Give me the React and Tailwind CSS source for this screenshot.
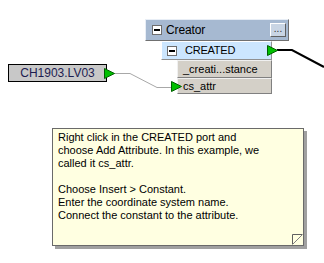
const Port = ({ className = '' }) => (
  <svg className={`relative z-10 shrink-0 ${className}`} width="11" height="11" viewBox="0 0 11 11">
    <polygon points="0.5,0.5 10.5,5.5 0.5,10.5" fill="#00c000" stroke="#006000" strokeWidth="1" />
  </svg>
);

const MinusBox = () => (
  <span className="flex h-[10px] w-[10px] shrink-0 items-center justify-center border border-[#6e6e6e] bg-white">
    <span className="h-[2px] w-[6px] bg-black" />
  </span>
);

const attrRow =
  'flex w-[95px] items-center border border-t-[#f0f0f0] border-l-[#f0f0f0] border-r-[#808080] border-b-[#808080] bg-[#d4d0c8] pl-[5px]';

export default function App() {
  return (
    <div className="relative h-[263px] w-[324px] overflow-hidden bg-white font-['Liberation_Sans',Arial,sans-serif] text-[11px] text-black">
      {/* connections */}
      <svg className="absolute left-0 top-0" width="324" height="263">
        <polyline points="114,73.5 130,73.5 157,87.5 172,87.5" fill="none" stroke="#a8a8a8" strokeWidth="1" />
        <polyline points="277,50 292,50 324,67" fill="none" stroke="#000" strokeWidth="2" />
      </svg>

      {/* source node */}
      <div className="absolute left-[8px] top-[64px] flex items-center">
        <div className="flex h-[18px] w-[99px] items-center justify-center border border-black bg-[#c8c8c8] text-[12px] text-[#1c1c50]">
          CH1903.LV03
        </div>
        <Port className="-ml-[3px]" />
      </div>

      {/* Creator transformer */}
      <div className="absolute left-[145px] top-[19px] flex flex-col items-start">
        <div className="flex h-[22px] w-[144px] items-center gap-[4px] border border-t-[#e8eef6] border-l-[#e8eef6] border-r-[#707070] border-b-[#707070] bg-[#a6b9d1] pl-[6px] pr-[2px]">
          <MinusBox />
          <span className="flex-1 text-[12px] tracking-[-0.01em]">Creator</span>
          <span className="flex h-[14px] w-[16px] items-start justify-center border border-t-white border-l-white border-r-[#606060] border-b-[#606060] bg-[#c9d5e4] text-[10px] leading-[9px] text-[#303030]">
            ...
          </span>
        </div>
        <div className="ml-[16px] flex items-center">
          <div className="flex h-[19px] w-[111px] items-center gap-[8px] border border-t-white border-l-white border-r-[#909090] border-b-[#909090] bg-[#cce6fe] pl-[5px]">
            <MinusBox />
            <span className="tracking-[-0.02em]">CREATED</span>
          </div>
          <Port className="-ml-[5px]" />
        </div>
        <div className={`ml-[32px] h-[18px] ${attrRow}`}>_creati...stance</div>
        <div className="ml-[26px] flex items-center">
          <Port />
          <div className={`-ml-[5px] h-[16px] ${attrRow}`}>cs_attr</div>
        </div>
      </div>

      {/* annotation */}
      <div className="absolute left-[52px] top-[128px] flex h-[118px] w-[252px] flex-col border border-[#6a6a6a] bg-[#ffffe1] px-[5px] pt-[2px] leading-[13px] shadow-[3px_3px_0_#a0a0a0]">
        <p>Right click in the CREATED port and</p>
        <p>choose Add Attribute. In this example, we</p>
        <p>called it cs_attr.</p>
        <p className="mt-[13px]">Choose Insert &gt; Constant.</p>
        <p>Enter the coordinate system name.</p>
        <p>Connect the constant to the attribute.</p>
        <svg className="absolute bottom-0 right-0" width="11" height="11" viewBox="0 0 11 11">
          <path d="M0.5,10.5 L0.5,0.5 L10.5,0.5" fill="none" stroke="#606060" />
          <path d="M1,10 L10,1" stroke="#808080" />
        </svg>
      </div>
    </div>
  );
}
